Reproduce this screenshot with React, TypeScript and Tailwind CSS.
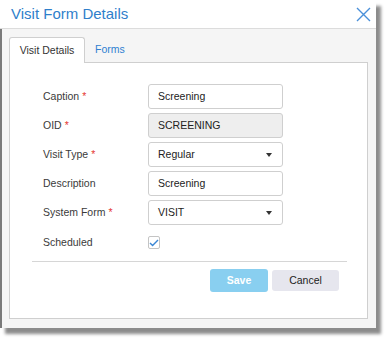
import React from 'react';

const font = { fontFamily: '"Liberation Sans", Arial, sans-serif' };

function Label({ text, required }: { text: string; required?: boolean }) {
  return (
    <div className="w-[105px] shrink-0 text-[10.5px] text-[#3a3a3a]">
      {text}
      {required && <span className="ml-[3px] text-[#e53935]">*</span>}
    </div>
  );
}

function Field({ value, disabled }: { value: string; disabled?: boolean }) {
  return (
    <div
      className={`flex h-[25px] w-[135px] items-center rounded-[3px] border border-[#cfcfcf] px-[9px] text-[10.5px] text-[#222] ${
        disabled ? 'bg-[#eeeeee]' : 'bg-white'
      }`}
    >
      {value}
    </div>
  );
}

function Select({ value }: { value: string }) {
  return (
    <div className="flex h-[25px] w-[135px] items-center justify-between rounded-[3px] border border-[#cfcfcf] bg-white pl-[9px] pr-[10px] text-[10.5px] text-[#222]">
      <span>{value}</span>
      <svg width="6" height="4" viewBox="0 0 6 4">
        <path d="M0 0h6L3 4z" fill="#333" />
      </svg>
    </div>
  );
}

export default function App() {
  return (
    <div className="h-[343px] w-[390px] bg-white" style={font}>
      <div className="flex h-[328px] w-[376px] flex-col shadow-[5px_6px_3px_rgba(0,0,0,0.45)]">
        {/* header */}
        <div className="flex h-[29px] shrink-0 items-center justify-between border-b border-[#dcdcdc] bg-white pl-[11px] pr-[5px]">
          <span className="text-[15px] text-[#2f7fcb]">Visit Form Details</span>
          <svg width="15" height="15" viewBox="0 0 15 15">
            <path d="M1 1l13 13M14 1L1 14" stroke="#4a90d9" strokeWidth="1.4" />
          </svg>
        </div>

        {/* body */}
        <div className="flex flex-1 flex-col border-l-2 border-[#7a7a7a] bg-[#f5f5f5] pb-[9px] pl-[7px] pr-[8px] pt-[8px]">
          <div className="flex items-end">
            <div className="relative z-10 -mb-px flex h-[26px] w-[76px] items-center justify-center rounded-t-[3px] border border-b-0 border-[#cfcfcf] bg-white text-[10.5px] text-[#333]">
              Visit Details
            </div>
            <div className="flex h-[25px] items-center px-[10px] text-[10.5px] text-[#2f80d1]">Forms</div>
          </div>

          <div className="flex flex-1 flex-col border border-[#cfcfcf] bg-white pt-[21px]">
            <div className="flex flex-col gap-[4px] pl-[33px]">
              <div className="flex items-center">
                <Label text="Caption" required />
                <Field value="Screening" />
              </div>
              <div className="flex items-center">
                <Label text="OID" required />
                <Field value="SCREENING" disabled />
              </div>
              <div className="flex items-center">
                <Label text="Visit Type" required />
                <Select value="Regular" />
              </div>
              <div className="flex items-center">
                <Label text="Description" />
                <Field value="Screening" />
              </div>
              <div className="flex items-center">
                <Label text="System Form" required />
                <Select value="VISIT" />
              </div>
              <div className="flex h-[27px] items-center">
                <Label text="Scheduled" />
                <div className="flex h-[13px] w-[12px] items-center justify-center rounded-[2px] border border-[#c4c4c4] bg-white">
                  <svg width="10" height="8" viewBox="0 0 10 8">
                    <path d="M1 4l2.6 2.6L9 1" fill="none" stroke="#3a86d4" strokeWidth="1.4" />
                  </svg>
                </div>
              </div>
            </div>

            <div className="ml-[22px] mr-[20px] mt-[5px] border-t border-[#d6d6d6]" />

            <div className="mr-[28px] mt-[7px] flex justify-end gap-[4px]">
              <div className="flex h-[23px] w-[58px] items-center justify-center rounded-[3px] bg-[#89cff0] text-[10.5px] font-bold text-white">
                Save
              </div>
              <div className="flex h-[21px] w-[67px] items-center justify-center self-center rounded-[3px] bg-[#e6e6ee] text-[10.5px] text-[#222]">
                Cancel
              </div>
            </div>
          </div>
        </div>
      </div>
    </div>
  );
}
